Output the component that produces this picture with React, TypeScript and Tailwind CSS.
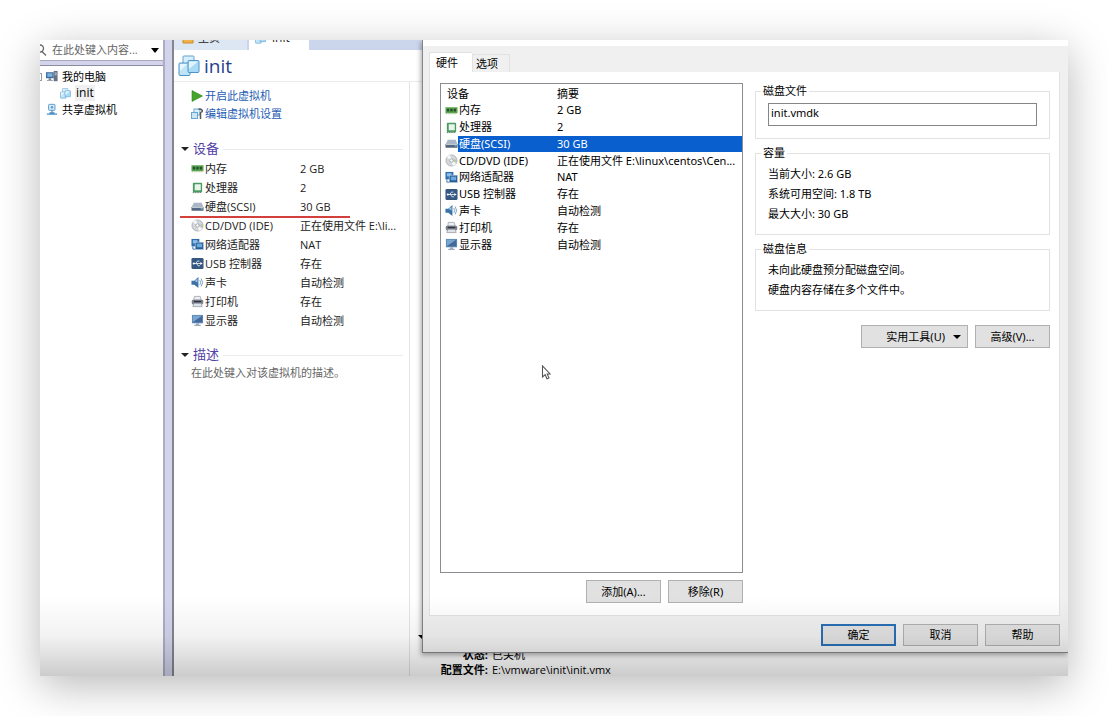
import React from "react";

type IconName =
  | "memory"
  | "cpu"
  | "disk"
  | "cd"
  | "network"
  | "usb"
  | "sound"
  | "printer"
  | "display";

type Device = {
  icon: IconName;
  name: string;
  summary: string;
  shortSummary?: string;
};

const devices: Device[] = [
  { icon: "memory", name: "内存", summary: "2 GB" },
  { icon: "cpu", name: "处理器", summary: "2" },
  { icon: "disk", name: "硬盘(SCSI)", summary: "30 GB" },
  {
    icon: "cd",
    name: "CD/DVD (IDE)",
    summary: "正在使用文件 E:\\linux\\centos\\Cen...",
    shortSummary: "正在使用文件 E:\\li...",
  },
  { icon: "network", name: "网络适配器", summary: "NAT" },
  { icon: "usb", name: "USB 控制器", summary: "存在" },
  { icon: "sound", name: "声卡", summary: "自动检测" },
  { icon: "printer", name: "打印机", summary: "存在" },
  { icon: "display", name: "显示器", summary: "自动检测" },
];

const DeviceIcon = ({ name }: { name: IconName }) => {
  return (
    <svg viewBox="0 0 14 14" className="block h-[13px] w-[13px] shrink-0" aria-hidden="true">
      {name === "memory" && (
        <>
          <rect x="0.5" y="3.5" width="13" height="6.5" fill="#5aa552" />
          <path d="M2 5h2.5v3H2zM5.7 5h2.5v3H5.7zM9.4 5h2.5v3H9.4z" fill="#24502a" />
          <path d="M1 10.5h12" stroke="#a3b98c" strokeDasharray="1 1" />
        </>
      )}
      {name === "cpu" && (
        <>
          <rect x="2" y="2" width="10" height="10" rx="1" fill="#4a9a62" />
          <rect x="4" y="3.5" width="6.5" height="6.5" fill="#e9f5ea" />
          <path d="M2 12.5h10" stroke="#2a5c3b" strokeDasharray="1 1" />
        </>
      )}
      {name === "disk" && (
        <>
          <path d="M3 3h8.5l2 5h-13z" fill="#a9b6c6" />
          <rect x="0.5" y="7.5" width="13" height="4" rx="0.5" fill="#54677f" />
          <path d="M1 8h12" stroke="#cfd9e4" />
          <rect x="10.5" y="9" width="2" height="1" fill="#7fd6ff" />
        </>
      )}
      {name === "cd" && (
        <>
          <circle cx="7" cy="7" r="6" fill="#d3d7db" stroke="#a0a6ac" strokeWidth="0.8" />
          <path d="M7 7L2 3.5A6 6 0 0 1 5.5 1.2zM7 7l5 3.5a6 6 0 0 1-3.5 2.3z" fill="#f7f9fa" />
          <path d="M7 7l5.6-1.5A6 6 0 0 1 12.6 9z" fill="#b6c9ac" />
          <circle cx="7" cy="7" r="1.8" fill="#fff" stroke="#8d959c" strokeWidth="0.8" />
        </>
      )}
      {name === "network" && (
        <>
          <rect x="0.5" y="1" width="8.5" height="8" fill="#2f6cab" />
          <rect x="2" y="2.3" width="5" height="3.5" fill="#86bdea" />
          <rect x="4.5" y="4.5" width="9" height="8" fill="#285c97" stroke="#c3dcf2" strokeWidth="0.6" />
          <rect x="6.2" y="6" width="5.8" height="4" fill="#6aa9de" />
          <path d="M2 9v3h2.5" fill="none" stroke="#41719f" />
        </>
      )}
      {name === "usb" && (
        <>
          <rect x="0.5" y="1" width="13" height="12" rx="1.5" fill="#365880" />
          <path d="M2.5 7h8M5 7l2-2.6h2M6 7l1.6 2.5h2" fill="none" stroke="#dfeaf5" />
          <path d="M10 5.3L12.5 7L10 8.7z" fill="#fff" />
          <circle cx="3" cy="7" r="1.2" fill="#fff" />
        </>
      )}
      {name === "sound" && (
        <>
          <path d="M0.5 5h3L8 1v12L3.5 9.5h-3z" fill="#3c72a5" />
          <path d="M4 5.5L7 3v4z" fill="#9cc8ea" />
          <path d="M9.5 4.5q1.8 2.5 0 5M11 2.8q3 4.2 0 8.4" fill="none" stroke="#6c9bc5" />
        </>
      )}
      {name === "printer" && (
        <>
          <path d="M3.5 1.5h6.5l1 4H3z" fill="#eceef2" stroke="#8b919b" strokeWidth="0.7" />
          <rect x="0.8" y="5.2" width="12.4" height="5" rx="1.5" fill="#7c818d" />
          <rect x="3" y="6.3" width="8" height="1.5" fill="#30343e" />
          <path d="M3 9h8l1 3.5H2z" fill="#dfe2e8" stroke="#868c96" strokeWidth="0.7" />
        </>
      )}
      {name === "display" && (
        <>
          <rect x="1" y="1" width="12" height="9" fill="#5f89b5" />
          <path d="M2 2h10L2 9z" fill="#7aa5d0" />
          <path d="M12 2v7H2z" fill="#42699a" />
          <path d="M5.5 10h3v1.5h2V13h-7v-1.5h2z" fill="#9aa9bb" />
        </>
      )}
    </svg>
  );
};

const VmIcon = ({ className }: { className: string }) => {
  return (
    <svg viewBox="0 0 22 22" className={className} aria-hidden="true">
      <rect x="5" y="1" width="11" height="12" rx="1" fill="#d8eefb" stroke="#63a3cf" />
      <rect x="1" y="8" width="11" height="12.5" rx="1" fill="#bfe3f7" stroke="#4c95c6" />
      <rect x="10" y="5.5" width="11" height="12" rx="1" fill="#a9daf5" stroke="#4c95c6" />
      <path d="M11 6.5h9L11 14z" fill="#e2f4fd" />
      <path d="M2 9h7L2 16z" fill="#e8f6fd" />
    </svg>
  );
};

const SectionTitle = ({ title }: { title: string }) => {
  return (
    <h2 className="flex h-5 items-center text-[13px] text-[#5040a8]">
      <span className="mr-1 h-0 w-0 border-x-4 border-t-4 border-x-transparent border-t-[#222]" />
      {title}
      <span className="ml-1 h-px flex-1 bg-[#ebebeb]" />
    </h2>
  );
};

const Sidebar = () => {
  return (
    <aside className="flex w-[123px] shrink-0 flex-col bg-[#d3d3ec]">
      <div className="flex h-[21px] items-center border-b border-[#a9a9bd] bg-white">
        <svg viewBox="0 0 8 12" className="h-3 w-2 shrink-0" aria-hidden="true">
          <path d="M0 1a3.5 3.5 0 0 1 0 7M2 7.5l4 4" fill="none" stroke="#666" strokeWidth="1.3" />
        </svg>
        <input
          type="text"
          aria-label="搜索"
          placeholder="在此处键入内容..."
          className="ml-1 w-0 flex-1 bg-transparent text-[11px] leading-4 outline-none placeholder:text-[#666]"
        />
        <span className="mr-1 h-0 w-0 border-x-4 border-t-[5px] border-x-transparent border-t-black" />
      </div>
      <ul className="mt-1 flex-1 border-t border-[#8c8ca0] bg-white pt-0.5 text-[11px] leading-[17px] text-black">
        <li className="flex items-center">
          <span className="h-2 w-0.5 border-y border-r border-[#999]" />
          <svg viewBox="0 0 14 14" className="mx-1 h-[13px] w-3" aria-hidden="true">
            <rect x="0" y="2" width="9" height="7" fill="#3d6d9e" />
            <rect x="1.5" y="3.3" width="6" height="4" fill="#7fb4df" />
            <path d="M3 9h3v2h2v1H1v-1h2z" fill="#7b8794" />
            <rect x="9" y="0.5" width="4.5" height="12" fill="#66727f" />
            <path d="M10 3h2.5M10 5h2.5" stroke="#d6dde4" />
          </svg>
          我的电脑
        </li>
        <li className="flex items-center pl-5">
          <VmIcon className="mr-1 h-[11px] w-[11px]" />
          <span className="bg-[#f0f0f0] px-px text-xs leading-4">init</span>
        </li>
        <li className="flex items-center pl-1.5">
          <svg viewBox="0 0 14 14" className="mr-1 h-[13px] w-3" aria-hidden="true">
            <rect x="3" y="1" width="7.5" height="7" rx="1" fill="#d5ecfa" stroke="#4b8fc2" />
            <path d="M7 8v3M1 12.5h12M4 11h6" stroke="#4b8fc2" strokeWidth="1.4" />
            <circle cx="7" cy="4.5" r="1.5" fill="#5b9fd0" />
          </svg>
          共享虚拟机
        </li>
      </ul>
    </aside>
  );
};

const DocumentTabs = () => {
  return (
    <div className="flex h-2.5 items-end overflow-hidden bg-[#cbd6ec] text-[11px] leading-4 text-[#222]">
      <div className="flex w-[73px] items-center bg-[#dde6f3] pl-2">
        <svg viewBox="0 0 12 12" className="mb-1 mr-1 h-3 w-3" aria-hidden="true">
          <path d="M1 5l5-4 5 4v6H1z" fill="#f0b34a" stroke="#d08b25" />
        </svg>
        <span className="mb-1">主页</span>
      </div>
      <div className="ml-0.5 flex w-[60px] items-center bg-white pl-1.5">
        <VmIcon className="mb-1 mr-1.5 h-[11px] w-[11px]" />
        <span className="mb-1 text-xs leading-4">init</span>
      </div>
    </div>
  );
};

const VmSummary = () => {
  return (
    <div className="w-[236px] shrink-0 border-r border-[#e4e4e4] pt-[5px] text-[11px] text-[#222]">
      <ul className="pl-[17px] leading-[18px] text-[#1f5db5]">
        <li>
          <a href="#power" className="flex items-center">
            <svg viewBox="0 0 12 12" className="mr-0.5 h-3 w-3" aria-hidden="true">
              <path d="M1 0.5L11.5 6L1 11.5z" fill="#43a52c" stroke="#2f8420" strokeWidth="0.6" />
            </svg>
            开启此虚拟机
          </a>
        </li>
        <li>
          <a href="#settings" className="flex items-center">
            <svg viewBox="0 0 12 12" className="mr-0.5 h-3 w-3" aria-hidden="true">
              <rect x="3" y="1" width="6" height="6" fill="#dff0fa" stroke="#6aa6cf" />
              <rect x="0.5" y="4.5" width="6" height="6" fill="#cbe6f6" stroke="#6aa6cf" />
              <path d="M7.5 1.5q2-1.5 4 1l-1 2M9.5 4v7" fill="none" stroke="#555" strokeWidth="1.5" />
            </svg>
            编辑虚拟机设置
          </a>
        </li>
      </ul>
      <section className="mt-4 pl-[7px] pr-1.5">
        <SectionTitle title="设备" />
        <table className="w-full table-fixed border-collapse leading-[18px]">
          <tbody>
            {devices.map((device) => (
              <tr key={device.name} className="h-[19px]">
                <td className="w-[119px] p-0 pl-2.5">
                  <span className="relative flex items-center gap-px whitespace-nowrap">
                    <DeviceIcon name={device.icon} />
                    {device.name}
                    {device.icon === "disk" && (
                      <span className="absolute -left-[11px] top-full h-0.5 w-[170px] bg-[#d3403c]" />
                    )}
                  </span>
                </td>
                <td className="whitespace-nowrap p-0">{device.shortSummary ?? device.summary}</td>
              </tr>
            ))}
          </tbody>
        </table>
      </section>
      <section className="mt-[15px] pl-[7px] pr-1.5">
        <SectionTitle title="描述" />
        <p className="pl-2.5 leading-4 text-[#666]">在此处键入对该虚拟机的描述。</p>
      </section>
    </div>
  );
};

const buttonBase = "border text-[11px] leading-4 text-black bg-[#e1e1e1]";

const GroupBox = ({ title, children }: { title: string; children: React.ReactNode }) => {
  return (
    <fieldset className="min-w-0 border border-[#e2e2e2] px-3">
      <legend className="-ml-[7px] px-0.5 leading-4">{title}</legend>
      {children}
    </fieldset>
  );
};

const HardwareList = () => {
  return (
    <div className="flex-1 border border-[#8a8c92] bg-white pt-0.5">
      <table className="h-[167px] w-full table-fixed border-collapse text-left leading-4">
        <thead>
          <tr>
            <th className="w-[116px] p-0 pl-1.5 font-normal">设备</th>
            <th className="p-0 font-normal">摘要</th>
          </tr>
        </thead>
        <tbody>
          {devices.map((device) => {
            const selected = device.icon === "disk";
            return (
              <tr key={device.name} className={selected ? "text-white" : ""}>
                <td className="p-0 pl-1">
                  <span className="flex items-center whitespace-nowrap">
                    <DeviceIcon name={device.icon} />
                    <span className={selected ? "flex-1 bg-[#0a5fce] pl-px" : "pl-px"}>
                      {device.name}
                    </span>
                  </span>
                </td>
                <td className={selected ? "bg-[#0a5fce] p-0" : "whitespace-nowrap p-0"}>
                  {device.summary}
                </td>
              </tr>
            );
          })}
        </tbody>
      </table>
    </div>
  );
};

const SettingsDialog = () => {
  return (
    <div
      role="dialog"
      aria-label="虚拟机设置"
      className="absolute inset-y-0 left-[382px] right-0 mb-[23px] flex flex-col border-b border-l border-[#85858a] bg-[#f0f0f0] font-['Noto_Sans','Noto_Sans_CJK_SC',sans-serif] text-[11px] text-black shadow-[-1px_2px_5px_rgba(0,0,0,0.35)]"
    >
      <div className="h-1.5 bg-white" />
      <div className="flex flex-1 flex-col px-1.5 pr-2 pt-1.5">
        <div role="tablist" className="flex items-end">
          <button
            role="tab"
            aria-selected="true"
            className="h-5 w-[43px] border-l border-t border-[#e2e2e2] bg-white pr-2 leading-4"
          >
            硬件
          </button>
          <button
            role="tab"
            aria-selected="false"
            className="h-[18px] w-[38px] border border-b-0 border-[#e2e2e2] pr-2 leading-4"
          >
            选项
          </button>
        </div>
        <div className="flex flex-1 gap-3 border border-t-0 border-[#e2e2e2] bg-white pb-3 pl-2.5 pr-[9px] pt-[11px]">
          <div className="flex w-[303px] shrink-0 flex-col">
            <HardwareList />
            <div className="mt-[7px] flex justify-end gap-[7px]">
              <button className={`${buttonBase} h-[23px] w-[75px] border-[#b0b0b0]`}>添加(A)...</button>
              <button className={`${buttonBase} h-[23px] w-[75px] border-[#b0b0b0]`}>移除(R)</button>
            </div>
          </div>
          <div className="min-w-0 flex-1">
            <GroupBox title="磁盘文件">
              <input
                type="text"
                aria-label="磁盘文件"
                defaultValue="init.vmdk"
                className="mb-3 mt-1 block h-[23px] w-full border border-[#85858a] bg-white px-0.5 pb-1 text-[11px] outline-none"
              />
            </GroupBox>
            <div className="mt-1.5">
              <GroupBox title="容量">
                <div className="pb-2.5 pt-[3px] leading-5">
                  <p>当前大小: 2.6 GB</p>
                  <p>系统可用空间: 1.8 TB</p>
                  <p>最大大小: 30 GB</p>
                </div>
              </GroupBox>
            </div>
            <div className="mt-1.5">
              <GroupBox title="磁盘信息">
                <div className="pb-2.5 pt-[3px] leading-5">
                  <p>未向此硬盘预分配磁盘空间。</p>
                  <p>硬盘内容存储在多个文件中。</p>
                </div>
              </GroupBox>
            </div>
            <div className="mt-3.5 flex justify-end gap-[7px]">
              <button
                className={`${buttonBase} flex h-[23px] w-[107px] items-center justify-end gap-2 border-[#b0b0b0] pr-1.5`}
              >
                实用工具(U)
                <span className="h-0 w-0 border-x-4 border-t-4 border-x-transparent border-t-black" />
              </button>
              <button className={`${buttonBase} h-[23px] w-[75px] border-[#b0b0b0]`}>高级(V)...</button>
            </div>
          </div>
        </div>
        <div className="flex justify-end gap-[7px] pb-1.5 pt-2">
          <button className={`${buttonBase} h-[22px] w-[75px] border-2 border-[#2a6fb5]`}>确定</button>
          <button className={`${buttonBase} h-[22px] w-[75px] border-[#b0b0b0]`}>取消</button>
          <button className={`${buttonBase} h-[22px] w-[75px] border-[#b0b0b0]`}>帮助</button>
        </div>
      </div>
      {/* mouse pointer */}
      <svg
        viewBox="0 0 12 18"
        className="absolute left-[118px] top-[325px] h-4 w-[11px]"
        aria-hidden="true"
      >
        <path
          d="M1.5 1v12.5l3-2.6 2 4.6 2.3-1-2-4.4H10z"
          fill="#fff"
          stroke="#555"
          strokeWidth="1.2"
        />
      </svg>
    </div>
  );
};

const App = () => {
  return (
    <div className="flex min-h-screen bg-white p-10 font-['Open_Sans','Noto_Sans_CJK_SC',sans-serif]">
      <div className="relative flex flex-1 overflow-hidden bg-white shadow-[0_10px_40px_rgba(0,0,0,0.28)]">
        <Sidebar />
        <div className="w-[11px] shrink-0 border-l-2 border-r-2 border-l-[#adadc6] border-r-[#85858f] bg-[#d3d3ec]" />
        <main className="flex min-w-0 flex-1 flex-col">
          <DocumentTabs />
          <header className="flex h-8 items-center border-b border-[#ebebeb] pl-1">
            <VmIcon className="mr-1 h-[22px] w-[22px]" />
            <h1 className="text-[19px] leading-6 text-[#1f3f8c]">init</h1>
          </header>
          <div className="flex flex-1">
            <VmSummary />
            <section className="flex flex-1 flex-col justify-end pl-2 text-[11px] text-black">
              <span className="mb-2.5 h-0 w-0 border-x-4 border-t-4 border-x-transparent border-t-black" />
              <dl className="grid grid-cols-[70px_1fr] gap-x-1 gap-y-[3px] leading-3">
                <dt className="text-right font-bold">状态:</dt>
                <dd>已关机</dd>
                <dt className="text-right font-bold">配置文件:</dt>
                <dd>E:\vmware\init\init.vmx</dd>
              </dl>
            </section>
          </div>
        </main>
        <SettingsDialog />
        <div className="pointer-events-none absolute inset-x-0 bottom-0 h-20 bg-linear-to-b from-transparent via-black/5 to-black/20" />
      </div>
    </div>
  );
};

export default App;
